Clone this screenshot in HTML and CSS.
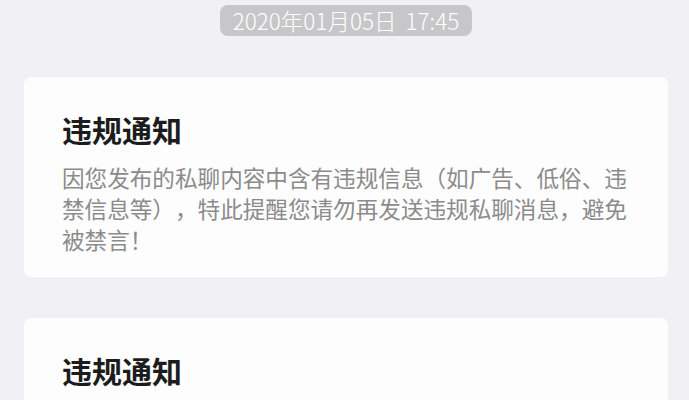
FILE: index.html
```html
<!DOCTYPE html>
<html lang="zh-CN">
<head>
<meta charset="utf-8">
<title>违规通知</title>
<link rel="stylesheet" href="styles.css">
</head>
<body>
<div class="page">
  <div class="time-row">
    <span class="time-pill">2020年01月05日 17:45</span>
  </div>
  <div class="card">
    <div class="card-title">违规通知</div>
    <div class="card-body">因您发布的私聊内容中含有违规信息（如广告、低俗、违禁信息等），特此提醒您请勿再发送违规私聊消息，避免被禁言！</div>
  </div>
  <div class="card">
    <div class="card-title">违规通知</div>
    <div class="card-body">因您发布的私聊内容中含有违规信息（如广告、低俗、违禁信息等），特此提醒您请勿再发送违规私聊消息，避免被禁言！</div>
  </div>
</div>
</body>
</html>
```
FILE: styles.css
```css
html, body {
  margin: 0;
  padding: 0;
  background: #f1f1f5;
}
body {
  font-family: "Noto Sans CJK SC", "Noto Sans", sans-serif;
  width: 689px;
  height: 400px;
  overflow: hidden;
}
.page {
  display: flex;
  flex-direction: column;
  padding: 5px 21px 0 24px;
  gap: 41px;
}
.time-row {
  display: flex;
  justify-content: center;
}
.time-pill {
  display: inline-block;
  height: 31px;
  line-height: 31px;
  padding: 0 12.5px;
  background: #c7c7c9;
  color: #ffffff;
  font-size: 22.5px;
  font-weight: 300;
  border-radius: 8px;
  word-spacing: 4px;
}
.card {
  background: #fdfdfd;
  border-radius: 7px;
  padding: 32px 36px 22px 38px;
}
.card-title {
  font-size: 30px;
  line-height: 40px;
  font-weight: 600;
  color: #1c1c1c;
}
.card-body {
  margin-top: 13px;
  font-size: 22.6px;
  line-height: 31px;
  color: #8b8b8b;
  text-spacing-trim: space-all;
}
```
